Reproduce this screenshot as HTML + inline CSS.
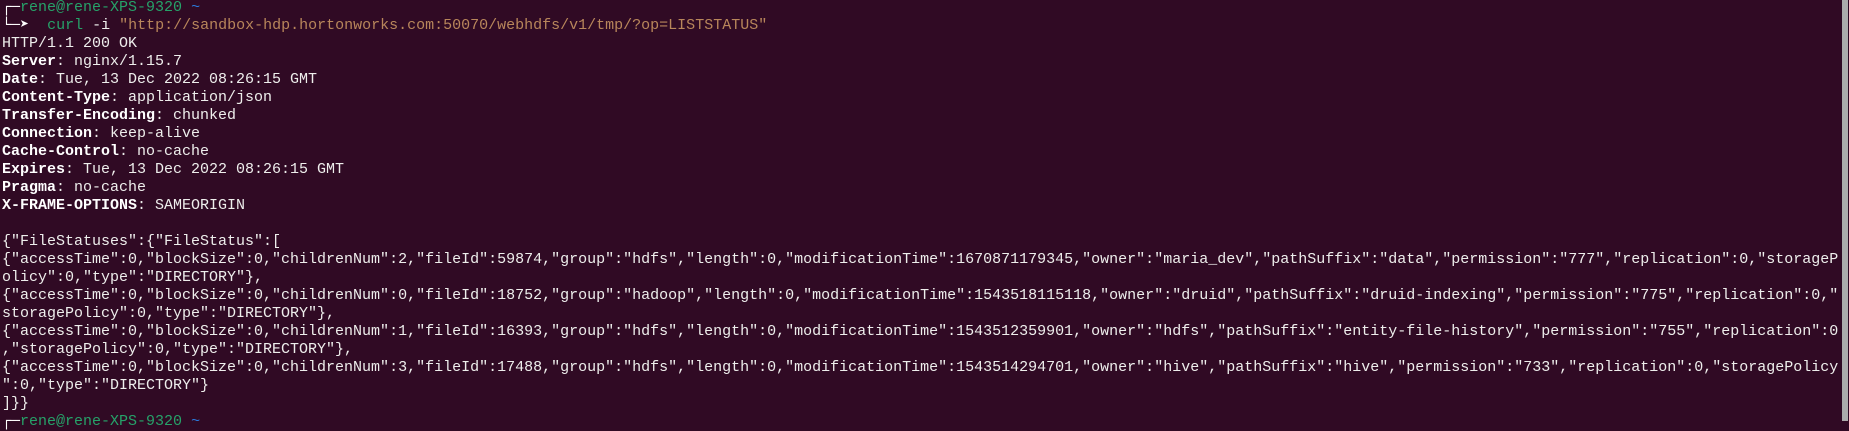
<!DOCTYPE html>
<html><head><meta charset="utf-8"><style>
html,body{margin:0;padding:0;background:#300a24;width:1849px;height:421px;overflow:hidden}
pre{margin:0;position:absolute;left:2px;top:-1px;font-family:"Liberation Mono","DejaVu Sans Mono",monospace;font-size:15px;line-height:18px;color:#eeeeec;white-space:pre}
b{font-weight:bold;color:#ffffff}
.g{color:#26a269}.bl{color:#2a7bde}.y{color:#b8865b}.w{color:#ffffff}
.sb{position:absolute;left:1842px;top:0;width:6px;height:421px;background:#ababab}
</style></head><body>
<pre><span class="w">┌─</span><span class="g">rene@rene-XPS-9320</span> <span class="bl">~</span>
<span class="w">└─➤</span>  <span class="g">curl</span> -i <span class="y">"http://sandbox-hdp.hortonworks.com:50070/webhdfs/v1/tmp/?op=LISTSTATUS"</span>
HTTP/1.1 200 OK
<b>Server</b>: nginx/1.15.7
<b>Date</b>: Tue, 13 Dec 2022 08:26:15 GMT
<b>Content-Type</b>: application/json
<b>Transfer-Encoding</b>: chunked
<b>Connection</b>: keep-alive
<b>Cache-Control</b>: no-cache
<b>Expires</b>: Tue, 13 Dec 2022 08:26:15 GMT
<b>Pragma</b>: no-cache
<b>X-FRAME-OPTIONS</b>: SAMEORIGIN

{"FileStatuses":{"FileStatus":[
{"accessTime":0,"blockSize":0,"childrenNum":2,"fileId":59874,"group":"hdfs","length":0,"modificationTime":1670871179345,"owner":"maria_dev","pathSuffix":"data","permission":"777","replication":0,"storageP
olicy":0,"type":"DIRECTORY"},
{"accessTime":0,"blockSize":0,"childrenNum":0,"fileId":18752,"group":"hadoop","length":0,"modificationTime":1543518115118,"owner":"druid","pathSuffix":"druid-indexing","permission":"775","replication":0,"
storagePolicy":0,"type":"DIRECTORY"},
{"accessTime":0,"blockSize":0,"childrenNum":1,"fileId":16393,"group":"hdfs","length":0,"modificationTime":1543512359901,"owner":"hdfs","pathSuffix":"entity-file-history","permission":"755","replication":0
,"storagePolicy":0,"type":"DIRECTORY"},
{"accessTime":0,"blockSize":0,"childrenNum":3,"fileId":17488,"group":"hdfs","length":0,"modificationTime":1543514294701,"owner":"hive","pathSuffix":"hive","permission":"733","replication":0,"storagePolicy
":0,"type":"DIRECTORY"}
]}}
<span class="w">┌─</span><span class="g">rene@rene-XPS-9320</span> <span class="bl">~</span></pre>
<div class="sb"></div>
</body></html>
